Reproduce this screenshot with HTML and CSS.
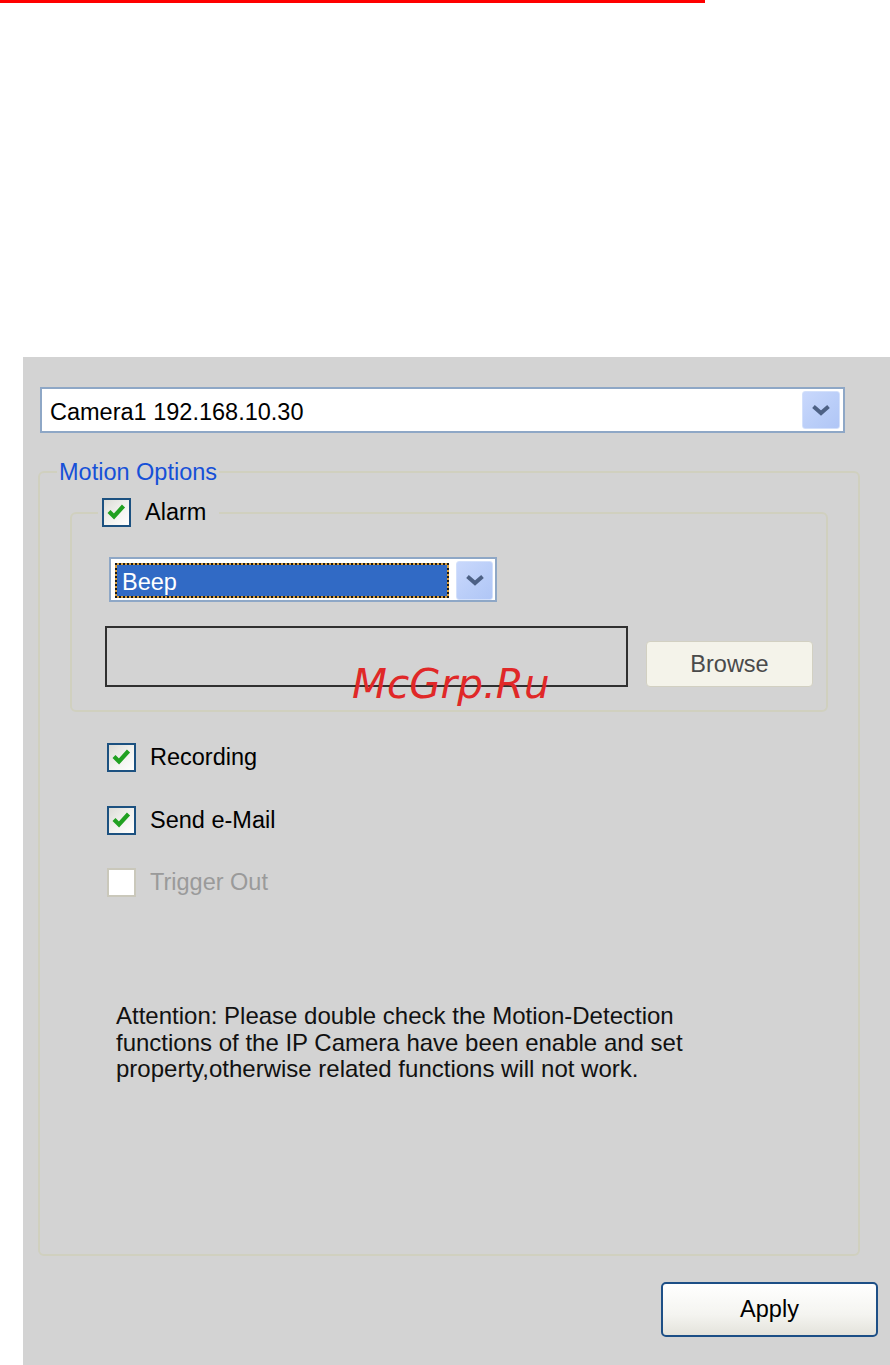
FILE: index.html
```html
<!DOCTYPE html>
<html lang="en">
<head>
<meta charset="utf-8">
<title>Motion Options</title>
<link rel="stylesheet" href="styles.css">
</head>
<body>
<div class="redline"></div>
<div class="panel">
  <div class="combo combo-camera">
    <span class="combo-text">Camera1 192.168.10.30</span>
    <span class="combo-btn"><svg width="20" height="12" viewBox="0 0 20 12"><polyline points="2.5,2.5 10,9 17.5,2.5" fill="none" stroke="#4d6185" stroke-width="4"/></svg></span>
  </div>

  <fieldset class="group group-motion">
    <legend class="group-title">Motion Options</legend>

    <fieldset class="group group-alarm">
      <legend class="check-legend">
        <span class="checkbox"><svg width="25" height="25" viewBox="0 0 25 25"><polyline points="5,11.5 10,16.5 19.5,6" fill="none" stroke="#21a121" stroke-width="4.2"/></svg></span>
        <span class="check-label">Alarm</span>
      </legend>
      <div class="combo combo-beep">
        <span class="combo-selected">Beep</span>
        <span class="combo-btn"><svg width="20" height="12" viewBox="0 0 20 12"><polyline points="2.5,2.5 10,9 17.5,2.5" fill="none" stroke="#4d6185" stroke-width="4"/></svg></span>
      </div>
      <div class="file-row">
        <div class="file-box"></div>
        <button class="btn btn-browse" type="button">Browse</button>
      </div>
    </fieldset>

    <div class="options">
      <div class="check-row">
        <span class="checkbox"><svg width="25" height="25" viewBox="0 0 25 25"><polyline points="5,11.5 10,16.5 19.5,6" fill="none" stroke="#21a121" stroke-width="4.2"/></svg></span>
        <span class="check-label">Recording</span>
      </div>
      <div class="check-row">
        <span class="checkbox"><svg width="25" height="25" viewBox="0 0 25 25"><polyline points="5,11.5 10,16.5 19.5,6" fill="none" stroke="#21a121" stroke-width="4.2"/></svg></span>
        <span class="check-label">Send e-Mail</span>
      </div>
      <div class="check-row disabled">
        <span class="checkbox"></span>
        <span class="check-label">Trigger Out</span>
      </div>
    </div>

    <p class="attention">Attention: Please double check the Motion-Detection<br>functions of the IP Camera have been enable and set<br>property,otherwise related functions will not work.</p>
  </fieldset>

  <div class="actions">
    <button class="btn btn-apply" type="button">Apply</button>
  </div>

  <div class="watermark">McGrp.Ru</div>
</div>
</body>
</html>
```

FILE: styles.css
```css
html, body {
  margin: 0;
  padding: 0;
  background: #ffffff;
}

body {
  font-family: "Liberation Sans", Arial, sans-serif;
  font-size: 23.5px;
  color: #000;
  width: 890px;
  height: 1365px;
  overflow: hidden;
}

.redline {
  width: 705px;
  height: 3px;
  background: #ff0000;
}

.panel {
  position: relative;
  margin: 354px 0 0 23px;
  height: 1008px;
  background: #d3d3d3;
  padding: 30px 0 0 15px;
  box-sizing: border-box;
}

/* combo boxes */
.combo {
  display: flex;
  align-items: center;
  box-sizing: border-box;
  background: #ffffff;
  border: 2px solid #8ea7c6;
}

.combo-camera {
  width: 805px;
  height: 46px;
  margin-left: 2px;
  padding: 0 3px 0 8px;
}

.combo-text {
  flex: 1;
  line-height: 42px;
  padding-top: 3px;
}

.combo-btn {
  display: flex;
  align-items: center;
  justify-content: center;
  width: 38px;
  height: 38px;
  box-sizing: border-box;
  border: 1px solid #d3e0fb;
  border-radius: 3px;
  background: linear-gradient(135deg, #c9d8fc 0%, #b9cdf8 60%, #b0c6f6 100%);
}

.combo-beep {
  width: 388px;
  height: 45px;
  margin-left: 37px;
  padding: 1px 2px 0 4px;
}

.combo-beep .combo-btn {
  width: 37px;
  height: 39px;
  margin-left: 7px;
}

.combo-selected {
  flex: 1;
  height: 35px;
  box-sizing: border-box;
  border: 2px dotted #1a1a1a;
  background: linear-gradient(#316ac5, #316ac5) padding-box, #d9a040 border-box;
  color: #ffffff;
  padding-left: 5px;
  line-height: 34px;
}

/* group boxes */
.group {
  margin: 0;
  border: 2px solid #d0d0bf;
  border-radius: 6px;
  box-sizing: border-box;
}

.group-motion {
  width: 822px;
  height: 798px;
  margin-top: 25px;
  padding: 12px 0 0 0;
}

.group-title {
  color: #1650d8;
  line-height: 28px;
  padding: 0 2px;
  margin-left: 17px;
}

.group-alarm {
  width: 758px;
  margin-left: 30px;
  padding: 30px 0 23px 0;
}

.check-legend {
  display: flex;
  align-items: center;
  margin-left: 26px;
  padding: 0 13px 0 4px;
  height: 29px;
}

/* checkboxes */
.checkbox {
  display: inline-flex;
  width: 29px;
  height: 29px;
  box-sizing: border-box;
  border: 2px solid #1c5180;
  background: linear-gradient(135deg, #dcdcd7 0%, #f3f3f0 55%, #ffffff 100%);
  flex: none;
}

.check-label {
  margin-left: 14px;
  line-height: 29px;
}

.disabled .checkbox {
  border-color: #cac8bb;
  background: #ffffff;
}

.disabled .check-label {
  color: #9a9a9a;
}

/* file row */
.file-row {
  display: flex;
  align-items: flex-end;
  margin: 24px 0 0 33px;
}

.file-box {
  width: 523px;
  height: 61px;
  box-sizing: border-box;
  border: 2px solid #303030;
}

.btn {
  font-family: "Liberation Sans", Arial, sans-serif;
  font-size: 23.5px;
  box-sizing: border-box;
  padding: 0;
  cursor: default;
}

.btn-browse {
  width: 167px;
  height: 46px;
  margin-left: 18px;
  border: 1px solid #d2d0c2;
  border-radius: 4px;
  background: #f4f3ea;
  color: #4a4a4a;
}

/* options */
.options {
  margin: 31px 0 0 67px;
  display: flex;
  flex-direction: column;
  gap: 33.5px;
}

.check-row {
  display: flex;
  align-items: center;
  height: 29px;
}

.attention {
  margin: 106px 0 0 76px;
  font-size: 24px;
  line-height: 26.5px;
  color: #111;
}

/* footer */
.actions {
  margin: 26px 0 0 623px;
}

.btn-apply {
  width: 217px;
  height: 55px;
  border: 2px solid #1d4f86;
  border-radius: 5px;
  background: linear-gradient(#ffffff 0%, #f4f4f0 60%, #e4e3dc 100%);
  color: #000;
}

.watermark {
  position: absolute;
  left: 329px;
  top: 307px;
  font-family: "DejaVu Sans", sans-serif;
  font-style: italic;
  font-size: 40.5px;
  line-height: 40px;
  color: #e02828;
  pointer-events: none;
}
```
